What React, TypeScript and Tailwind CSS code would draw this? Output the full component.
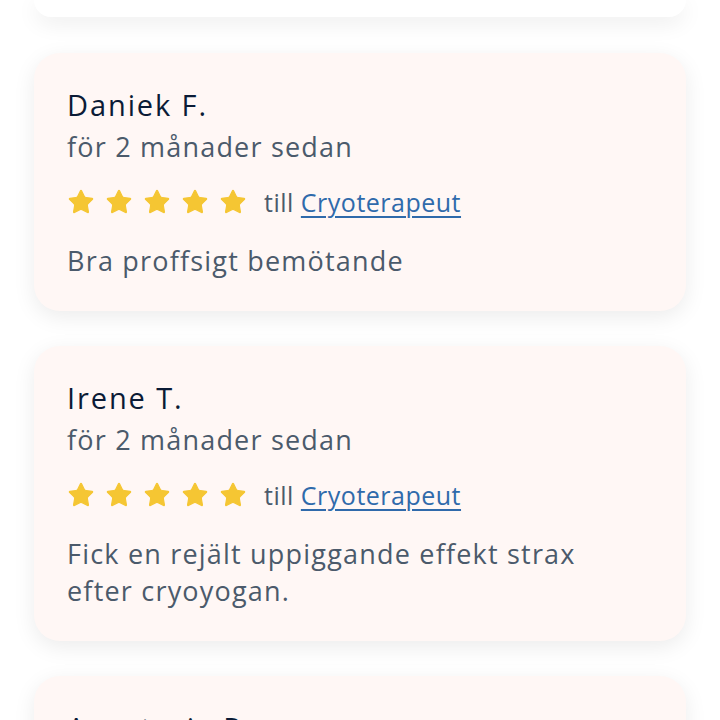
import { Star } from 'lucide-react'

type Review = {
  name: string
  time: string
  rating: number
  target: string
  text: string
}

const reviews: Review[] = [
  {
    name: 'Daniek F.',
    time: 'för 2 månader sedan',
    rating: 5,
    target: 'Cryoterapeut',
    text: 'Bra proffsigt bemötande',
  },
  {
    name: 'Irene T.',
    time: 'för 2 månader sedan',
    rating: 5,
    target: 'Cryoterapeut',
    text: 'Fick en rejält uppiggande effekt strax efter cryoyogan.',
  },
  {
    name: 'Anastasia P.',
    time: 'för 3 månader sedan',
    rating: 5,
    target: 'Cryoterapeut',
    text: 'Trevligt',
  },
]

function ReviewCard({ review }: { review: Review }) {
  return (
    <div className="rounded-[26px] bg-[#fff7f5] pl-[33px] pr-[50px] pt-[34px] pb-[32px] shadow-[0_6px_22px_rgba(0,0,0,0.08)]">
      <div className="text-[29px] leading-[36px] tracking-[1.9px] text-[#0b1b36]">{review.name}</div>
      <div className="mt-[6px] text-[27px] leading-[36px] tracking-[1.2px] text-[#4b5a6b]">{review.time}</div>
      <div className="mt-[19px] flex items-center">
        <div className="flex gap-[10px]">
          {Array.from({ length: review.rating }).map((_, i) => (
            <Star key={i} size={28} fill="#f5c633" stroke="#f5c633" strokeWidth={1} strokeLinejoin="miter" />
          ))}
        </div>
        <span className="ml-[17px] text-[25px] leading-[36px] tracking-[0.5px] text-[#4b5a6b]">
          till{' '}
          <a href="#" className="text-[#2f6aab] underline underline-offset-[4px] decoration-[2px]">
            {review.target}
          </a>
        </span>
      </div>
      <p className="mt-[22px] text-[27px] leading-[37px] tracking-[1.2px] text-[#4b5a6b]">{review.text}</p>
    </div>
  )
}

export default function App() {
  return (
    <div className="min-h-screen overflow-hidden bg-white px-[34px] font-['Open_Sans',sans-serif]">
      <div className="h-[17px] rounded-b-[26px] bg-white shadow-[0_6px_22px_rgba(0,0,0,0.08)]" />
      <div className="mt-[36px] flex flex-col gap-[35px]">
        {reviews.map((r) => (
          <ReviewCard key={r.name} review={r} />
        ))}
      </div>
    </div>
  )
}
